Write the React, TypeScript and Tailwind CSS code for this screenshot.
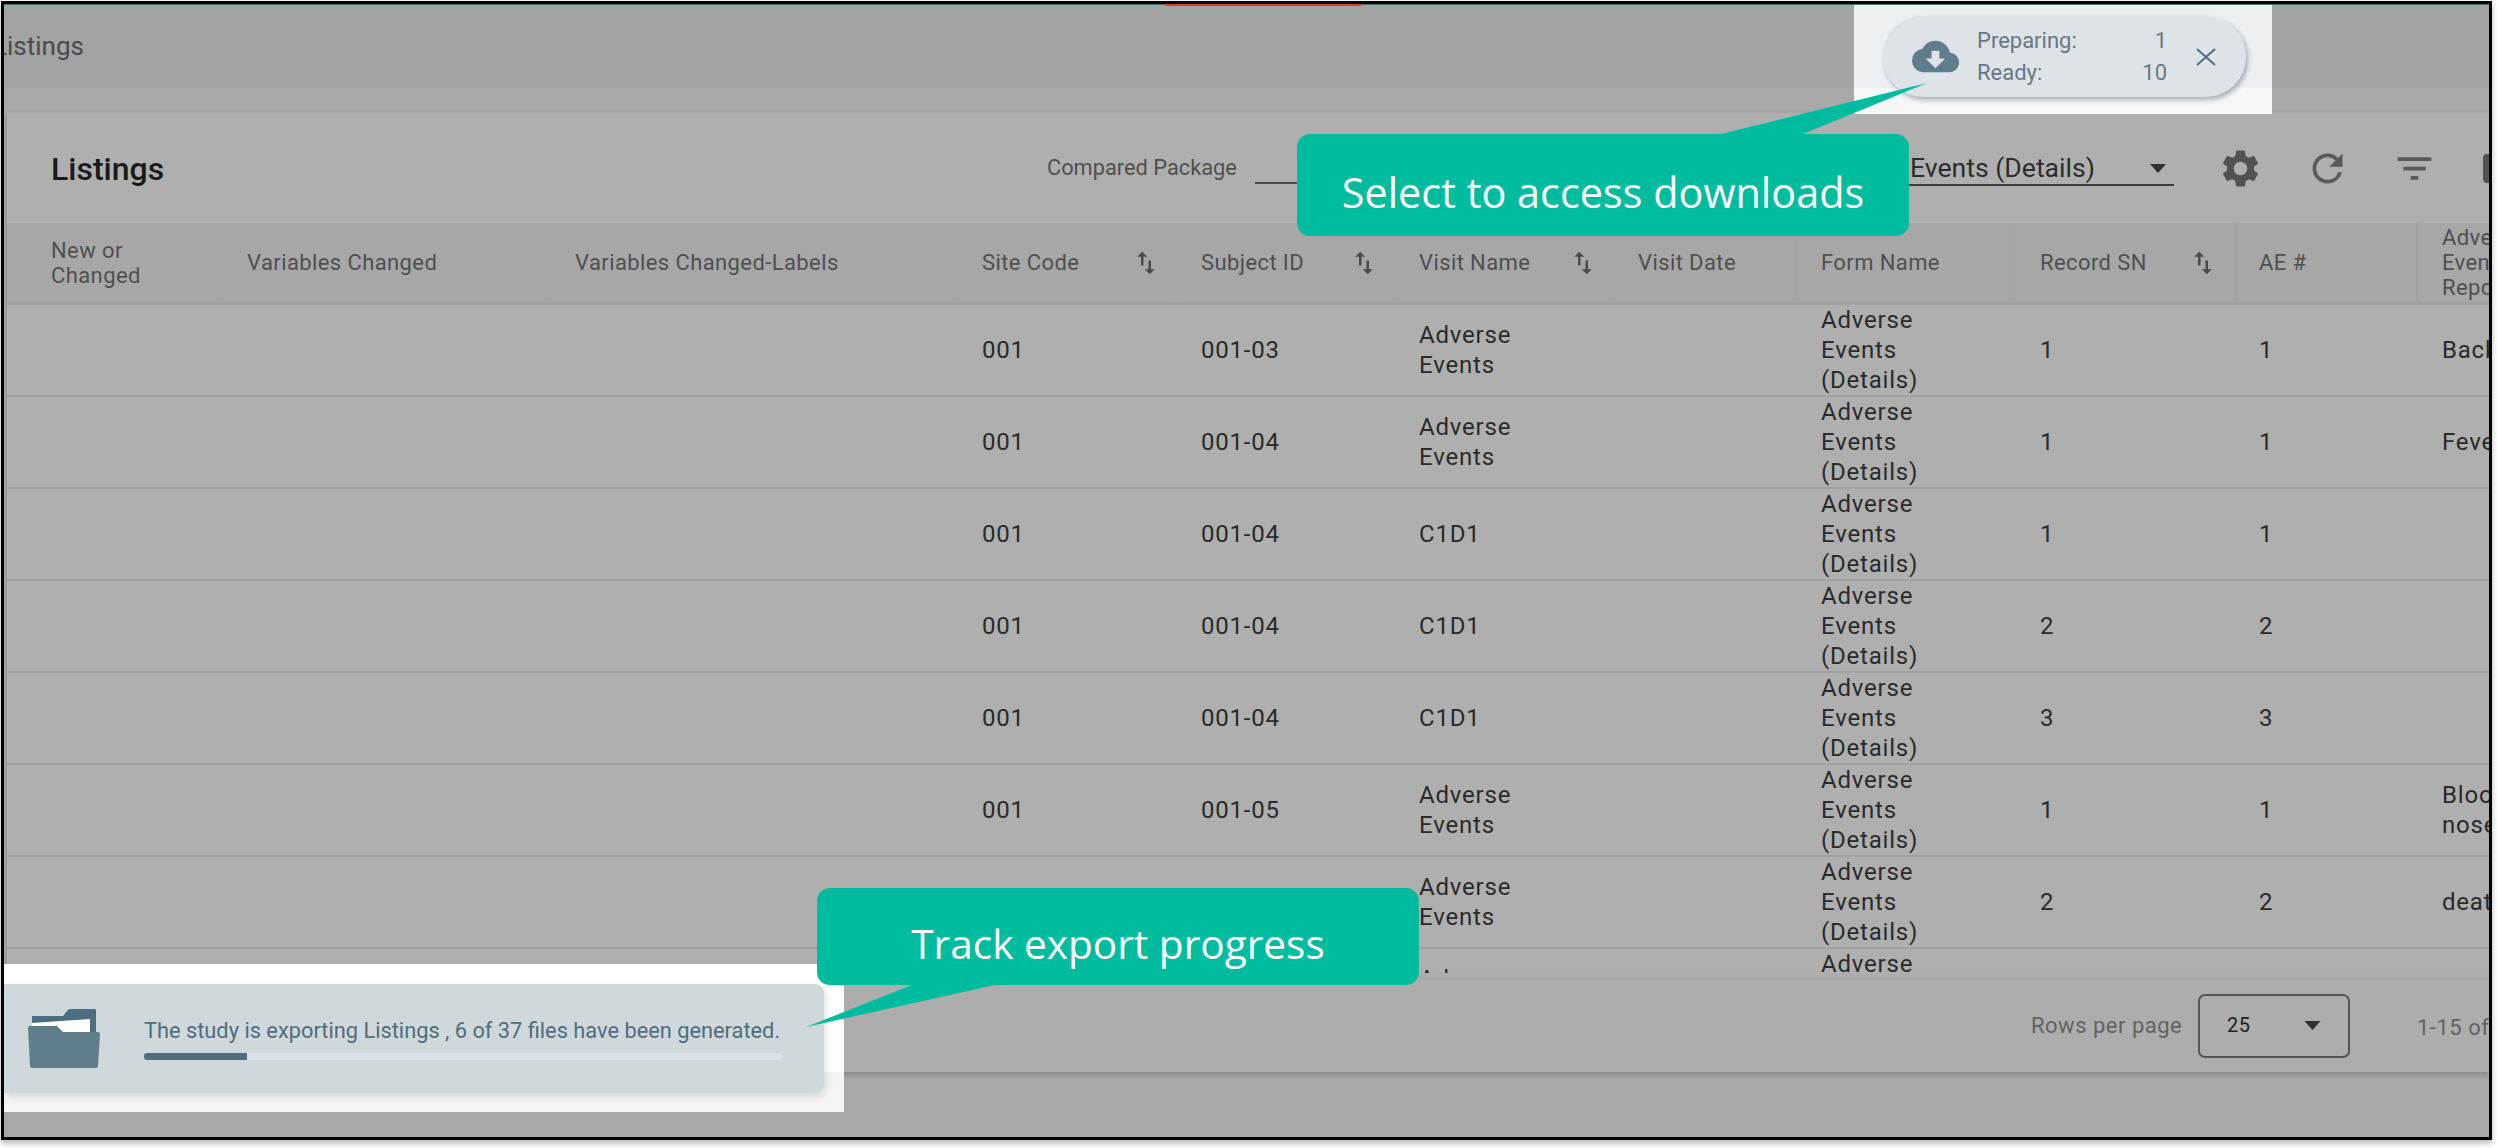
import { MdCloudDownload, MdFilterList, MdRefresh, MdSettings, MdSwapVert } from "react-icons/md";

const gridCols =
  "grid grid-cols-[216px_328px_407px_219px_218px_219px_183px_219px_221px_181px_200px]";

interface Column {
  label: string;
  sortable?: boolean;
  cell: string;
  wrap?: boolean;
}

const columns: Column[] = [
  { label: "New or Changed", wrap: true, cell: "pl-[44px] border-[#a6a6a6]" },
  { label: "Variables Changed", cell: "pl-6 border-[#a6a6a6]" },
  { label: "Variables Changed-Labels", cell: "pl-6 border-[#a6a6a6]" },
  { label: "Site Code", sortable: true, cell: "pl-6 pr-[14px] border-[#a6a6a6]" },
  { label: "Subject ID", sortable: true, cell: "pl-6 pr-[14px] border-[#a6a6a6]" },
  { label: "Visit Name", sortable: true, cell: "pl-6 pr-[14px] border-[#a6a6a6]" },
  { label: "Visit Date", cell: "pl-6 border-[#a6a6a6]" },
  { label: "Form Name", cell: "pl-6 border-[#a6a6a6]" },
  { label: "Record SN", sortable: true, cell: "pl-6 pr-[17px] border-[#a0a0a0]" },
  { label: "AE #", cell: "pl-[22px] border-[#a0a0a0]" },
  { label: "Adverse Event Reported", wrap: true, cell: "pl-6 border-transparent" },
];

const rows = [
  { site: "001", subject: "001-03", visit: "Adverse Events", sn: "1", ae: "1", term: "Back pain" },
  { site: "001", subject: "001-04", visit: "Adverse Events", sn: "1", ae: "1", term: "Fever" },
  { site: "001", subject: "001-04", visit: "C1D1", sn: "1", ae: "1", term: "" },
  { site: "001", subject: "001-04", visit: "C1D1", sn: "2", ae: "2", term: "" },
  { site: "001", subject: "001-04", visit: "C1D1", sn: "3", ae: "3", term: "" },
  { site: "001", subject: "001-05", visit: "Adverse Events", sn: "1", ae: "1", term: "Blood\nnose" },
  { site: "001", subject: "001-05", visit: "Adverse Events", sn: "2", ae: "2", term: "death" },
  { site: "001", subject: "001-06", visit: "Adverse Events", sn: "1", ae: "1", term: "" },
];

const Caret = ({ className }: { className: string }) => (
  <svg viewBox="0 0 16 9" className={className}>
    <path d="M0 0h16L8 9z" fill="currentColor" />
  </svg>
);

const FolderIcon = () => (
  <svg viewBox="0 0 72 59" className="w-[72px] h-[59px] shrink-0">
    <path d="M4 7h31l4-5q1-2 4-2h24q1 0 1 2v28H4z" fill="#4d6d80" />
    <path d="M4 14l58-4v18H4z" fill="#ffffff" />
    <path d="M2 17h27l6 6h35q2 0 2 2l-2 32q0 2-2 2H4q-2 0-2-2L0 19q0-2 2-2z" fill="#607d8b" />
  </svg>
);

export default function App() {
  return (
    <div className="relative w-[2500px] h-[1148px] overflow-hidden bg-white font-['Roboto',sans-serif]">
      <div className="ml-[1px] mt-[1px] w-[2491px] h-[1139px] border-[3px] border-black overflow-hidden bg-[#a9a9a9] shadow-[0_3px_6px_rgba(0,0,0,0.3)] flex flex-col">
        {/* top bar */}
        <div className="h-[84px] shrink-0 bg-[#a2a3a5] border-t-[1px] border-[#4d6d78] flex items-center">
          <span className="-ml-[11px] text-[26px] text-[#4a4a4a]">Listings</span>
        </div>
        <div className="absolute left-[1165px] top-[4px] w-[196px] h-[2px] bg-[#d2491f]"></div>

        {/* listing card */}
        <div className="mt-[25px] ml-[3px] h-[959px] shrink-0 bg-[#afafaf] shadow-[0_3px_6px_rgba(0,0,0,0.2)] flex flex-col overflow-hidden">
          <div className="h-[110px] shrink-0 flex items-center">
            <h1 className="ml-[44px] mt-[2px] w-[113px] shrink-0 text-[32px] font-medium text-[#1a1a1a]">Listings</h1>
            <span className="ml-[883px] w-[190px] shrink-0 whitespace-nowrap text-[21.8px] text-[#4f4f4f]">
              Compared Package
            </span>
            <div className="ml-[18px] w-[340px] h-[30px] mt-[2px] shrink-0 border-b-2 border-[#4a4a4a]"></div>
            <div className="ml-[60px] w-[519px] h-[34px] mt-[2px] shrink-0 border-b-2 border-[#3c3c3c] flex items-center justify-end pr-[8px] text-[26.6px] text-[#2c2c2c]">
              <span className="mr-[55px] whitespace-nowrap">Adverse Events (Details)</span>
              <Caret className="w-[16px] h-[9px] text-[#2f2f38]" />
            </div>
            <MdSettings className="ml-[44px] w-[45px] h-[45px] shrink-0 text-[#525252]" />
            <MdRefresh className="ml-[42px] w-[45px] h-[45px] shrink-0 text-[#5a5a5a]" />
            <MdFilterList className="ml-[42px] w-[45px] h-[45px] shrink-0 text-[#5a5a5a]" />
            <div className="ml-[46px] w-[30px] h-[29px] shrink-0 rounded-[4px] bg-[#525252]"></div>
          </div>

          {/* table head */}
          <div className={`${gridCols} h-[82px] shrink-0 bg-[#a7a7a7] border-b-[3px] border-[#a0a0a0] text-[22px] tracking-[0.4px] leading-[25px] text-[#4f4f4f]`}>
            {columns.map((col) => (
              <div key={col.label} className={`flex items-center justify-between border-r-2 overflow-hidden ${col.cell}`}>
                <span className={col.wrap ? "w-min" : "whitespace-nowrap"}>{col.label}</span>
                {col.sortable && <MdSwapVert className="w-[30px] h-[30px] shrink-0 text-[#4a4a4a]" />}
              </div>
            ))}
          </div>

          {/* table body */}
          <div className="h-[668px] shrink-0 overflow-hidden text-[24px] leading-[30px] tracking-[0.8px] text-[#2a2a2a]">
            {rows.map((row, i) => (
              <div key={i} className={`${gridCols} h-[92px] items-center border-b-2 border-[#a1a1a1]`}>
                <div></div>
                <div></div>
                <div></div>
                <div className="pl-6">{row.site}</div>
                <div className="pl-6">{row.subject}</div>
                <div className="pl-6 w-min">{row.visit}</div>
                <div></div>
                <div className="pl-6 w-min">Adverse Events (Details)</div>
                <div className="pl-6">{row.sn}</div>
                <div className="pl-[22px]">{row.ae}</div>
                <div className="pl-6 whitespace-pre-line">{row.term}</div>
              </div>
            ))}
          </div>

          {/* pagination */}
          <div className="h-[7px] shrink-0 bg-[linear-gradient(#aeaeae,#a8a8a8)]"></div>
          <div className="flex-1 bg-[#adadad] flex items-start pt-[14px] text-[22px] tracking-[0.5px] text-[#626262]">
            <span className="ml-[2024px] mt-[15px] w-[151px] shrink-0 whitespace-nowrap">Rows per page</span>
            <div className="ml-[16px] w-[152px] h-[64px] shrink-0 rounded-[7px] border-2 border-[#555555] flex items-start pt-[14px] pl-[27px] pr-[27px] justify-between text-[20px] text-[#222222]">
              <span>25</span>
              <Caret className="w-[17px] h-[9px] mt-[11px] text-[#2f2f38]" />
            </div>
            <span className="ml-[67px] mt-[17px] shrink-0 whitespace-nowrap">1-15 of 15</span>
          </div>
        </div>
      </div>

      {/* highlighted download pill */}
      <div className="absolute left-[1854px] top-[5px] w-[418px] h-[109px] pl-[29px] pt-[11px] bg-[linear-gradient(#edf0f2_0,#edf0f2_83px,#f6f7f7_83px)]">
        <div className="w-[363px] h-[81px] rounded-[40px] bg-[#dde3e7] shadow-[2px_3px_5px_rgba(70,90,105,0.45)] flex items-center pl-[29px]">
          <MdCloudDownload className="w-[47px] h-[47px] shrink-0 text-[#5f7d8c]" />
          <div className="ml-[18px] w-[190px] text-[22px] leading-[32px] text-[#687883]">
            <div className="flex justify-between">
              <span>Preparing:</span>
              <span>1</span>
            </div>
            <div className="flex justify-between">
              <span>Ready:</span>
              <span>10</span>
            </div>
          </div>
          <svg viewBox="0 0 20 18" className="ml-[29px] w-[20px] h-[18px] shrink-0 text-[#4d7080]">
            <path d="M1 1l18 16M19 1L1 17" stroke="currentColor" strokeWidth="2" fill="none" />
          </svg>
        </div>
      </div>

      {/* export progress toast */}
      <div className="absolute left-[4px] top-[964px] w-[840px] h-[148px] pt-[20px] pr-[20px] bg-[linear-gradient(#ffffff_0,#ffffff_108px,#f5f5f5_108px)]">
        <div className="w-[820px] h-[109px] rounded-r-[9px] bg-[#cfd8db] shadow-[2px_4px_8px_rgba(0,0,0,0.12)] flex items-center pl-[24px]">
          <FolderIcon />
          <div className="ml-[44px] w-[638px]">
            <div className="text-[21.8px] leading-[26px] text-[#4f6d7e] whitespace-nowrap">
              The study is exporting Listings , 6 of 37 files have been generated.
            </div>
            <div className="mt-[9px] h-[7px] rounded-[3px] bg-[#dde1e9] overflow-hidden">
              <div className="w-[103px] h-full bg-[#4d6d80]"></div>
            </div>
          </div>
        </div>
      </div>

      {/* callouts */}
      <svg viewBox="0 0 2500 1148" className="absolute inset-0 w-[2500px] h-[1148px] pointer-events-none">
        <polygon points="1713,136 1798,136 1927,83" fill="#00bc9f" />
        <polygon points="917,983 1004,983 806,1027" fill="#00bc9f" />
      </svg>
      <div className="absolute left-[1297px] top-[134px] w-[612px] h-[102px] rounded-[13px] bg-[#00bc9f] flex items-center justify-center pt-[14px] font-['Open_Sans',sans-serif] text-[41.4px] text-white">
        Select to access downloads
      </div>
      <div className="absolute left-[817px] top-[888px] w-[602px] h-[97px] rounded-[13px] bg-[#00bc9f] flex items-center justify-center pt-[16px] font-['Open_Sans',sans-serif] text-[40.6px] text-white">
        Track export progress
      </div>
    </div>
  );
}
